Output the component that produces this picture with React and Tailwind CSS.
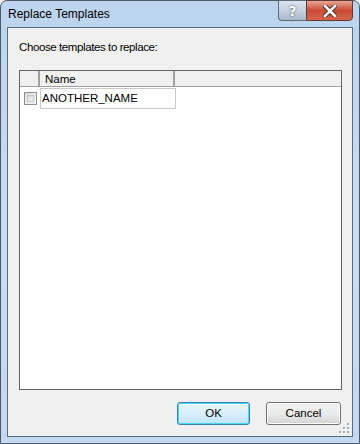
import React from 'react';

const font = { fontFamily: '"Liberation Sans", Arial, sans-serif' };

const Grip = () => (
    <svg width="10" height="10" viewBox="0 0 10 10" className="absolute right-[3px] bottom-[3px]">
        {[[8, 0], [8, 4], [4, 4], [8, 8], [4, 8], [0, 8]].map(([x, y]) => (
            <g key={`${x}-${y}`}>
                <rect x={x + 1} y={y + 1} width="2" height="2" fill="#ffffff" />
                <rect x={x} y={y} width="2" height="2" fill="#a0a8b0" />
            </g>
        ))}
    </svg>
);

const App = () => {
    return (
        <div className="w-[360px] h-[444px] bg-[#f0f0f0]">
            <div className="relative w-[360px] h-[444px] rounded-t-[7px] border border-[#4b5866] bg-gradient-to-b from-[#bcd4ee] via-[#c9dcf2] to-[#c3d9f1] flex flex-col">
                {/* Title bar */}
                <div className="h-[27px] flex items-start pl-[7px] pt-[6px]">
                    <span className="text-[12px] text-black leading-[15px]" style={font}>Replace Templates</span>
                </div>
                <div className="absolute top-[-1px] right-[6px] flex h-[21px]">
                    <div className="w-[28px] h-[21px] border border-[#5f6a78] border-r-0 rounded-bl-[4px] bg-gradient-to-b from-[#dbe5f0] via-[#c3d1e0] to-[#aabbcc] flex items-center justify-center">
                        <span className="text-[14px] font-bold text-white leading-none [text-shadow:0_0_2px_#2b3a4a]" style={{ fontFamily: '"DejaVu Sans", sans-serif' }}>?</span>
                    </div>
                    <div className="w-[47px] h-[21px] border border-[#5f3a34] rounded-br-[4px] bg-gradient-to-b from-[#e8a695] via-[#c94a34] to-[#d8664e] flex items-center justify-center">
                        <svg width="14" height="12" viewBox="0 0 14 12">
                            <path d="M2 1 L12 11 M12 1 L2 11" stroke="#3a2a2a" strokeWidth="4.5" strokeLinecap="square" />
                            <path d="M2 1 L12 11 M12 1 L2 11" stroke="#ffffff" strokeWidth="2.6" strokeLinecap="square" />
                        </svg>
                    </div>
                </div>

                {/* Client area */}
                <div className="relative ml-[6px] mr-[6px] mb-[6px] flex-1 border border-[#5c6b7a] bg-[#f0f0f0] flex flex-col pl-[11px] pr-[10px] pt-[12px] pb-[11px]" style={font}>
                    <div className="text-[11.5px] leading-[15px] tracking-[-0.4px] text-black">Choose templates to replace:</div>

                    <div className="mt-[15px] h-[320px] border border-[#646464] bg-white flex flex-col">
                        <div className="flex h-[16px] bg-[#f0f0f0] border-b border-[#a0a0a0]">
                            <div className="w-[20px] border-r-2 border-r-[#a0a0a0]" />
                            <div className="w-[135px] border-r-2 border-r-[#a0a0a0] pl-[5px] text-[11.5px] leading-[16px] text-black">Name</div>
                            <div className="flex-1" />
                        </div>
                        <div className="flex h-[21px] mt-[1px]">
                            <div className="w-[20px] flex items-center justify-center">
                                <div className="w-[13px] h-[13px] border border-[#8f8f8f] bg-gradient-to-br from-[#dcdcdc] to-[#f6f6f6] p-[2px]">
                                    <div className="w-full h-full border border-[#c8c8c8] bg-gradient-to-br from-[#d8d8d8] to-[#f2f2f2]" />
                                </div>
                            </div>
                            <div className="w-[136px] border border-[#c8c8c8] pl-[1px] text-[11.5px] leading-[19px] text-black">ANOTHER_NAME</div>
                        </div>
                    </div>

                    <div className="mt-[12px] flex justify-end gap-[16px] pr-[1px]">
                        <div className="w-[73px] h-[23px] rounded-[3px] border border-[#3c7fb1] bg-gradient-to-b from-[#e9f6fd] via-[#d8effc] to-[#bee6fd] shadow-[inset_0_0_0_1px_#48d8fb] flex items-center justify-center text-[11.5px] text-black">OK</div>
                        <div className="w-[75px] h-[23px] rounded-[3px] border border-[#707070] bg-gradient-to-b from-[#f2f2f2] via-[#ebebeb] to-[#d3d3d3] shadow-[inset_0_0_0_1px_#fcfcfc] flex items-center justify-center text-[11.5px] text-black">Cancel</div>
                    </div>
                    <Grip />
                </div>
            </div>
        </div>
    );
};

export default App;
